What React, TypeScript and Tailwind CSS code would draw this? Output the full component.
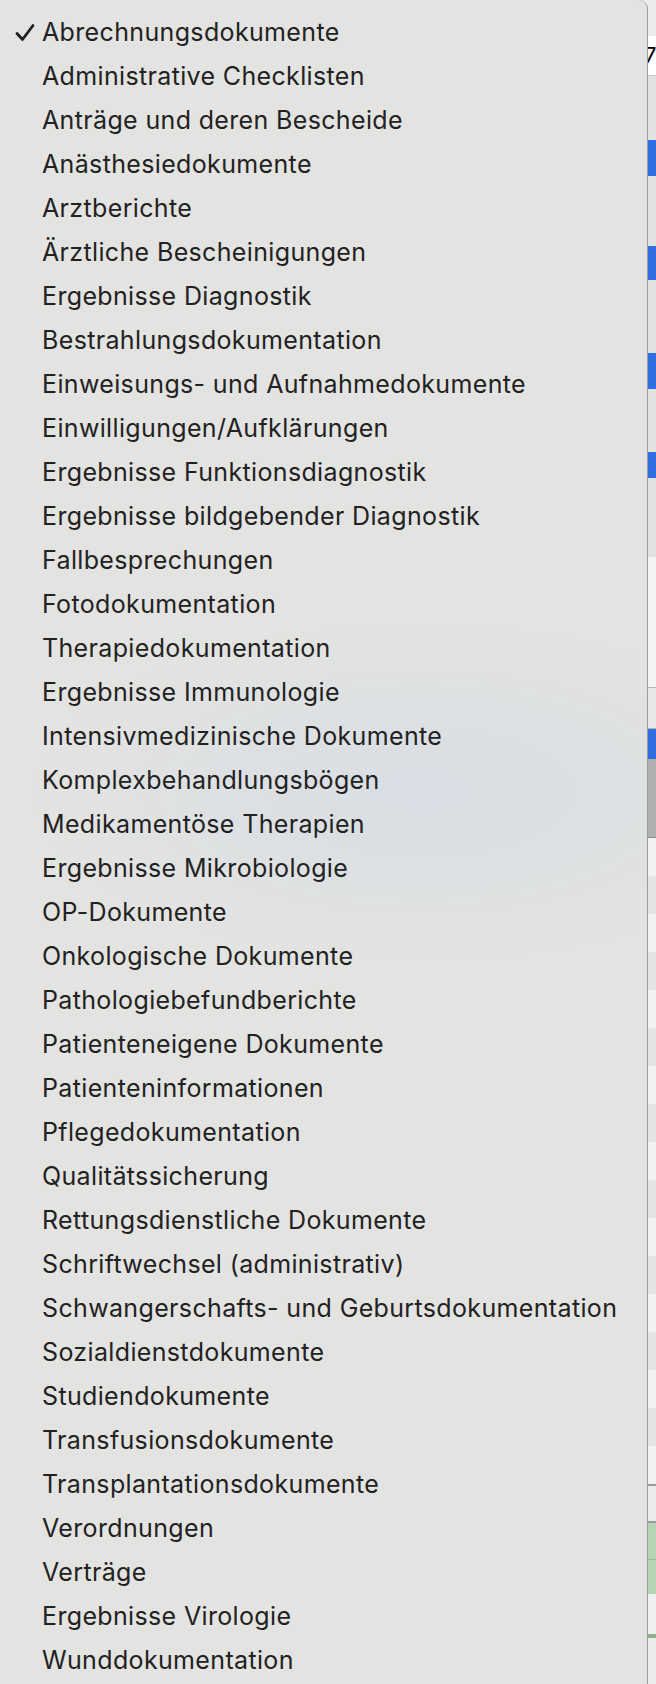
const items = [
  "Abrechnungsdokumente",
  "Administrative Checklisten",
  "Anträge und deren Bescheide",
  "Anästhesiedokumente",
  "Arztberichte",
  "Ärztliche Bescheinigungen",
  "Ergebnisse Diagnostik",
  "Bestrahlungsdokumentation",
  "Einweisungs- und Aufnahmedokumente",
  "Einwilligungen/Aufklärungen",
  "Ergebnisse Funktionsdiagnostik",
  "Ergebnisse bildgebender Diagnostik",
  "Fallbesprechungen",
  "Fotodokumentation",
  "Therapiedokumentation",
  "Ergebnisse Immunologie",
  "Intensivmedizinische Dokumente",
  "Komplexbehandlungsbögen",
  "Medikamentöse Therapien",
  "Ergebnisse Mikrobiologie",
  "OP-Dokumente",
  "Onkologische Dokumente",
  "Pathologiebefundberichte",
  "Patienteneigene Dokumente",
  "Patienteninformationen",
  "Pflegedokumentation",
  "Qualitätssicherung",
  "Rettungsdienstliche Dokumente",
  "Schriftwechsel (administrativ)",
  "Schwangerschafts- und Geburtsdokumentation",
  "Sozialdienstdokumente",
  "Studiendokumente",
  "Transfusionsdokumente",
  "Transplantationsdokumente",
  "Verordnungen",
  "Verträge",
  "Ergebnisse Virologie",
  "Wunddokumentation",
];

function Check() {
  return (
    <svg width="20" height="20" viewBox="0 0 20 20" className="text-[#1f1f1f]">
      <path
        d="M2 10.5 L7.5 16.5 L18 2.5"
        fill="none"
        stroke="currentColor"
        strokeWidth="2.8"
        strokeLinecap="round"
        strokeLinejoin="round"
      />
    </svg>
  );
}

// window behind the menu, only an 8px sliver shows
function Backdrop() {
  return (
    <div className="flex w-[8px] flex-col bg-[#ececec]">
      <div className="h-[36px]" />
      <div className="h-[39px] bg-white text-[22px] leading-[39px] text-black font-['Inter']">
        <span className="-ml-[4px]">7</span>
      </div>
      <div className="h-[1px] bg-[#c8c8c8]" />
      <div className="h-[64px] bg-[#e2e2e2]" />
      <div className="h-[36px] bg-[#2f6ee0]" />
      <div className="h-[70px] bg-[#e2e2e2]" />
      <div className="h-[34px] bg-[#2f6ee0]" />
      <div className="h-[73px] bg-[#e2e2e2]" />
      <div className="h-[36px] bg-[#2f6ee0]" />
      <div className="h-[63px] bg-[#e2e2e2]" />
      <div className="h-[26px] bg-[#2f6ee0]" />
      <div className="h-[79px] bg-[#e2e2e2]" />
      <div className="h-[130px] bg-[#f4f4f4]" />
      <div className="h-[1px] bg-[#b4b4b4]" />
      <div className="h-[40px] bg-[#e8e8e8]" />
      <div className="h-[1px] bg-[#b4b4b4]" />
      <div className="h-[30px] bg-[#2f6ee0]" />
      <div className="h-[78px] bg-[#b0b0b0]" />
      <div className="h-[1px] bg-[#8a8a8a]" />
      {Array.from({ length: 17 }).map((_, i) => (
        <div
          key={i}
          className={i % 2 === 0 ? "h-[38px] bg-[#f2f2f2]" : "h-[38px] bg-[#e4e4e4]"}
        />
      ))}
      <div className="h-[2px] bg-[#9a9a9a]" />
      <div className="h-[35px] bg-[#ececec]" />
      <div className="h-[2px] bg-[#9a9a9a]" />
      <div className="h-[36px] bg-[#b4d4b4]" />
      <div className="h-[1px] bg-[#9cc09c]" />
      <div className="h-[34px] bg-[#b4d4b4]" />
      <div className="h-[40px] bg-[#efefef]" />
      <div className="h-[4px] bg-[#8fb08f]" />
    </div>
  );
}

export default function App() {
  return (
    <div className="flex h-[1684px] w-[656px] overflow-hidden bg-[#ececec] font-['Inter',sans-serif]">
      <div className="relative h-full w-[648px] rounded-tr-[9px] border-r border-[#9c9c9c] bg-[#e3e3e1] bg-[radial-gradient(ellipse_60%_10%_at_65%_47%,#d8dee4,transparent)]">
        <ul className="flex flex-col pt-[11px]">
          {items.map((item, index) => (
            <li
              key={item}
              className="flex h-[44px] items-center text-[25px] tracking-[0.35px] text-[#222222]"
            >
              <span className="flex w-[42px] shrink-0 items-center justify-center pl-[8px]">
                {index === 0 && <Check />}
              </span>
              <span>{item}</span>
            </li>
          ))}
        </ul>
      </div>
      <Backdrop />
    </div>
  );
}
